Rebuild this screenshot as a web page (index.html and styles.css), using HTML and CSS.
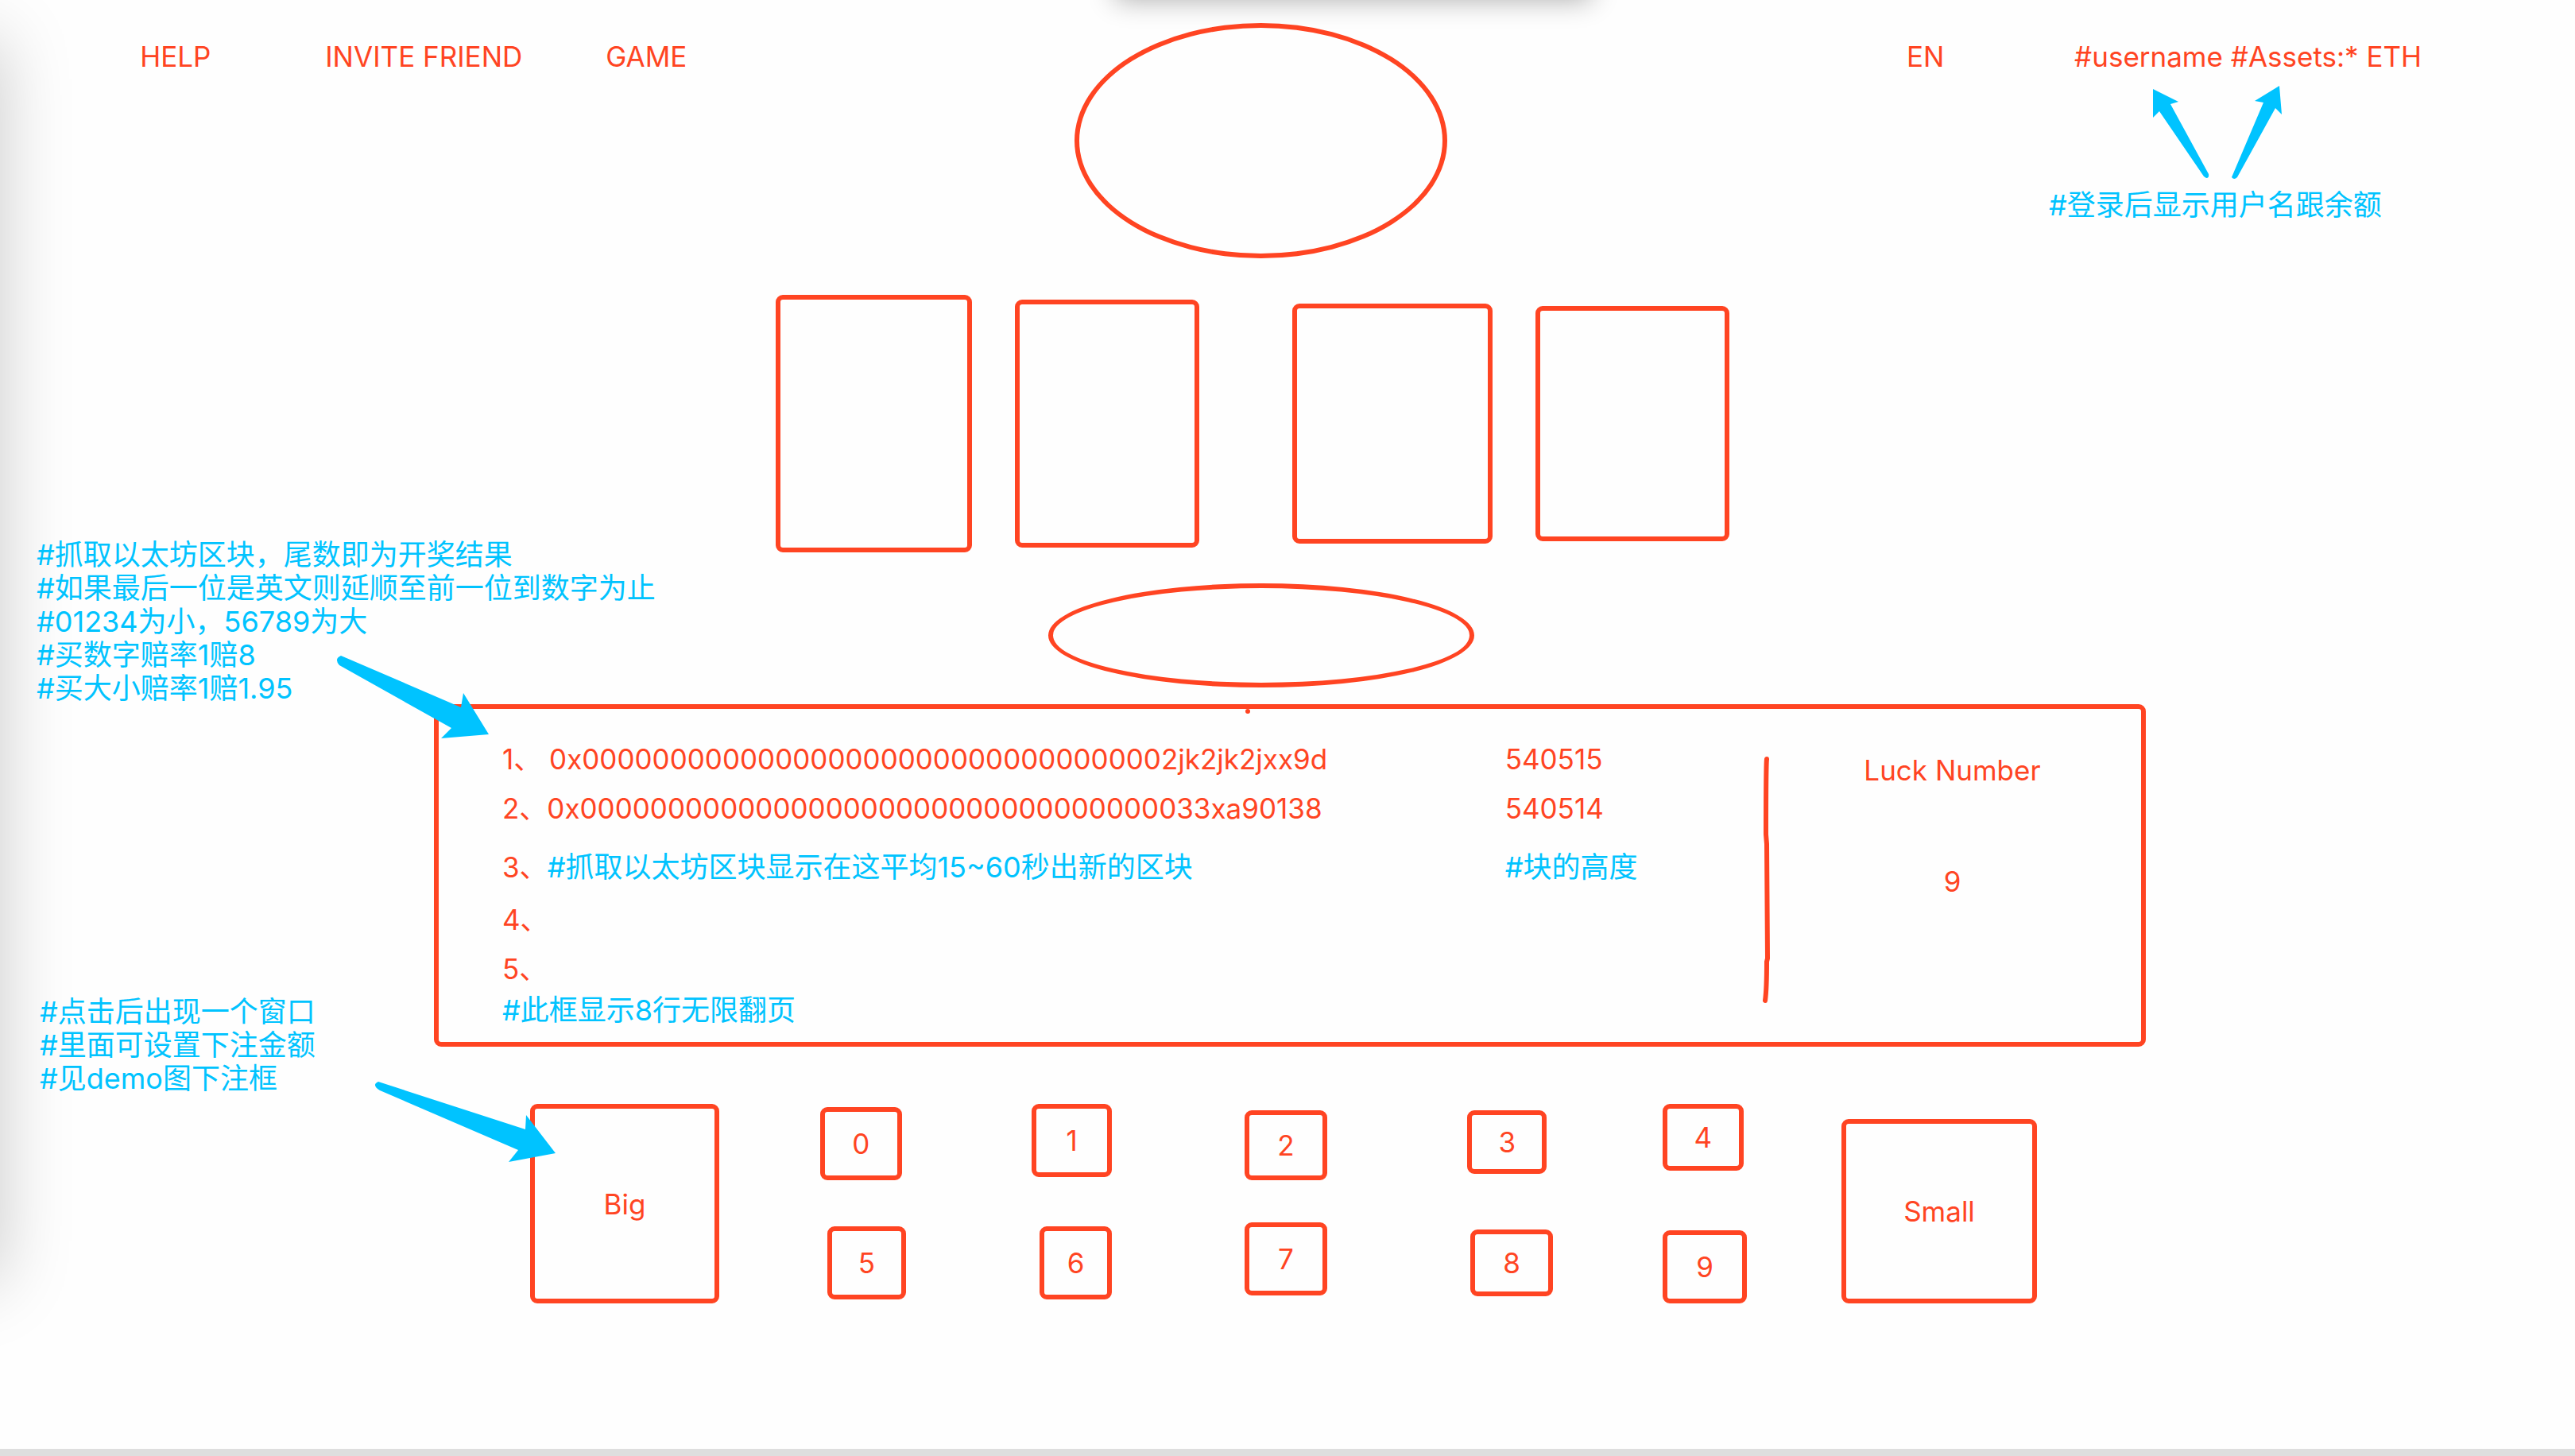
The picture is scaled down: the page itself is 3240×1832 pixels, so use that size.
FILE: index.html
```html
<!DOCTYPE html>
<html lang="zh-CN">
<head>
<meta charset="utf-8">
<meta name="viewport" content="width=device-width, initial-scale=1">
<title>Luck Number</title>
<link rel="stylesheet" href="styles.css">
</head>
<body>
<div class="page">
  <header class="header">
    <a class="link" href="#help">HELP</a>
    <a class="link" href="#invite">INVITE FRIEND</a>
    <a class="link" href="#game">GAME</a>
    <div class="logo"></div>
    <button class="link language" type="button">EN</button>
    <div class="link account">
      <span>#username #Assets:* ETH</span>
      <svg class="account-arrows" width="166" height="120" viewBox="0 0 166 120" aria-hidden="true">
        <path d="M2 6 34 22 24 25 72 113Q73 118 69 118L66 116 10 34 2 42Z"/>
        <path d="M161 2 164 38 156 30 108 117Q104 121 101 117L141 23 130 21Z"/>
      </svg>
      <p class="note account-note">#登录后显示用户名跟余额</p>
    </div>
  </header>

  <main>
    <div class="slots">
      <div class="slot slot-1"></div>
      <div class="slot slot-2"></div>
      <div class="slot slot-3"></div>
      <div class="slot slot-4"></div>
    </div>

    <div class="banner"></div>

    <section class="draws">
      <div class="note rules-note">
        <p>#抓取以太坊区块，尾数即为开奖结果</p>
        <p>#如果最后一位是英文则延顺至前一位到数字为止</p>
        <p>#01234为小，56789为大</p>
        <p>#买数字赔率1赔8</p>
        <p>#买大小赔率1赔1.95</p>
      </div>
      <div class="panel">
        <span class="dot"></span>
        <div class="blocks">
          <table>
            <tbody>
              <tr><td class="hash">1、 0x0000000000000000000000000000000002jk2jk2jxx9d</td><td>540515</td></tr>
              <tr><td class="hash">2、0x000000000000000000000000000000000033xa90138</td><td>540514</td></tr>
              <tr class="annotated"><td class="hash">3、<span class="note">#抓取以太坊区块显示在这平均15~60秒出新的区块</span></td><td class="note">#块的高度</td></tr>
              <tr><td class="hash">4、</td><td></td></tr>
              <tr><td class="hash">5、</td><td></td></tr>
            </tbody>
          </table>
          <p class="note">#此框显示8行无限翻页</p>
        </div>
        <svg class="divider" width="8" height="310" viewBox="0 0 8 310" aria-hidden="true">
          <path d="M4 3Q3 10 3 98L4 110 5 254 4 258Q4 292 2 307"/>
        </svg>
        <dl class="luck">
          <dt>Luck Number</dt>
          <dd>9</dd>
        </dl>
        <svg class="arrow panel-arrow" width="192" height="106" viewBox="0 0 192 106" aria-hidden="true">
          <path d="M6 1 157 66 160 48 192 100 132 105 145 92 4 13Q-3 5 6 1Z"/>
        </svg>
      </div>
    </section>

    <section class="bets">
      <div class="note bet-note">
        <p>#点击后出现一个窗口</p>
        <p>#里面可设置下注金额</p>
        <p>#见demo图下注框</p>
      </div>
      <div class="side side-big">
        <button class="bet" type="button">Big</button>
        <svg class="arrow bet-arrow" width="228" height="103" viewBox="0 0 228 103" aria-hidden="true">
          <path d="M5 1 190 61 191 43 228 91 169 102 181 87 7 12Q-4 5 5 1Z"/>
        </svg>
      </div>
      <button class="bet key key-0" type="button">0</button>
      <button class="bet key key-1" type="button">1</button>
      <button class="bet key key-2" type="button">2</button>
      <button class="bet key key-3" type="button">3</button>
      <button class="bet key key-4" type="button">4</button>
      <button class="bet key key-5" type="button">5</button>
      <button class="bet key key-6" type="button">6</button>
      <button class="bet key key-7" type="button">7</button>
      <button class="bet key key-8" type="button">8</button>
      <button class="bet key key-9" type="button">9</button>
      <button class="bet side-small" type="button">Small</button>
    </section>
  </main>

  <footer class="footer"></footer>
</div>
</body>
</html>
```
FILE: styles.css
```css
:root {
  --red: #ff4422;
  --blue: #00c3ff;
  --line: 6px;
  --radius: 9px;
}

* {
  box-sizing: border-box;
}

body {
  margin: 0;
  background: #fefefe;
  color: var(--red);
  font: 35px/42px Inter, "Noto Sans CJK SC", sans-serif;
}

p,
dl,
dd {
  margin: 0;
}

.page {
  position: relative;
  display: flex;
  flex-direction: column;
  min-height: 100vh;
  overflow: hidden;
}

/* Soft shadows that fall in from the left and top edges */
.page::before,
.page::after {
  content: "";
  position: absolute;
  pointer-events: none;
}

.page::before {
  left: -100px;
  top: 50px;
  bottom: 220px;
  width: 100px;
  box-shadow: 0 0 90px rgba(0, 0, 0, 0.21);
}

.page::after {
  left: 43.3%;
  right: 38.2%;
  top: -100px;
  height: 100px;
  box-shadow: 0 0 32px rgba(0, 0, 0, 0.32);
}

.note {
  color: var(--blue);
  font-size: 36px;
}

.note p,
p.note {
  white-space: nowrap;
}

.arrow {
  position: absolute;
  fill: var(--blue);
}

/* Header */
.header {
  display: grid;
  grid-template-columns: 233fr 353fr 590fr 469fr 578fr 211fr 630fr;
  align-items: start;
  padding: 29px 0 0 5.44%;
}

.link {
  margin: 21px 0 0;
  padding: 0;
  border: 0;
  background: none;
  color: inherit;
  font: inherit;
  text-align: left;
  text-decoration: none;
  white-space: nowrap;
}

.logo {
  height: 296px;
  border: var(--line) solid var(--red);
  border-radius: 50%;
}

.language {
  grid-column: 6;
}

.account {
  position: relative;
}

.account-arrows {
  position: absolute;
  top: 56px;
  left: 97px;
  fill: var(--blue);
}

.account-note {
  position: absolute;
  top: 187px;
  left: -32px;
}

/* Picture slots */
.slots {
  display: grid;
  grid-template-columns: 976fr 247fr 54fr 232fr 117fr 252fr 54fr 244fr 1064fr;
  align-items: center;
  margin-top: 46px;
}

.slot {
  border: var(--line) solid var(--red);
  border-radius: var(--radius);
}

.slot-1 {
  grid-column: 2;
  height: 324px;
}

.slot-2 {
  grid-column: 4;
  height: 312px;
}

.slot-3 {
  grid-column: 6;
  height: 302px;
}

.slot-4 {
  grid-column: 8;
  height: 296px;
}

.banner {
  width: 16.55%;
  height: 131px;
  margin: 39px 0 0 40.7%;
  border: var(--line) solid var(--red);
  border-radius: 50%;
}

/* Draw results */
.draws {
  position: relative;
  display: grid;
  grid-template-columns: 546fr 2154fr 540fr;
  margin-top: 21px;
}

.rules-note {
  position: absolute;
  left: 46px;
  top: -209px;
}

.panel {
  position: relative;
  grid-column: 2;
  display: grid;
  grid-template-columns: 1667fr 8px 467fr;
  align-items: start;
  border: var(--line) solid var(--red);
  border-radius: var(--radius);
}

.dot {
  position: absolute;
  left: 47.4%;
  top: 0;
  width: 6px;
  height: 6px;
  border-radius: 50%;
  background: var(--red);
}

.blocks {
  padding: 42px 0 19px 80px;
}

table {
  width: 100%;
  border-collapse: collapse;
}

td {
  padding: 0 0 20px;
  white-space: nowrap;
}

.hash {
  width: 79.5%;
}

.annotated td {
  padding: 12px 0 24px;
}

tr:last-child td {
  padding-bottom: 10px;
}

.divider {
  margin-top: 60px;
  fill: none;
  stroke: var(--red);
  stroke-width: 6px;
  stroke-linecap: round;
  overflow: visible;
}

.luck {
  display: grid;
  gap: 98px;
  padding: 56px 8px 0 0;
  text-align: center;
}

.panel-arrow {
  left: -129px;
  top: -68px;
}

/* Betting keys */
.bets {
  position: relative;
  display: grid;
  grid-template-columns: 667fr 238fr 127fr 108fr 158fr 101fr 167fr 104fr 176fr 108fr 138fr 106fr 119fr 246fr 677fr;
  grid-template-rows: 96px 102px;
  row-gap: 53px;
  align-items: center;
  margin-top: 72px;
}

.bet-note {
  position: absolute;
  left: 50px;
  top: -137px;
}

.bet {
  padding: 0;
  border: var(--line) solid var(--red);
  border-radius: var(--radius);
  background: none;
  color: inherit;
  font: inherit;
}

.side-big {
  position: relative;
  grid-area: 1 / 2 / 3 / 3;
  display: grid;
  height: 100%;
}

.side-small {
  grid-area: 1 / 14 / 3 / 15;
  align-self: end;
  height: 232px;
}

.bet-arrow {
  right: 206px;
  top: -29px;
}

.key {
  height: 92px;
  width: 100%;
}

.key-0 {
  grid-area: 1 / 4;
  align-self: end;
  width: 95%;
}

.key-1 {
  grid-area: 1 / 6;
  align-self: start;
}

.key-2 {
  grid-area: 1 / 8;
  align-self: end;
  height: 88px;
}

.key-3 {
  grid-area: 1 / 10;
  height: 80px;
  width: 93%;
}

.key-4 {
  grid-area: 1 / 12;
  align-self: start;
  height: 84px;
  width: 96%;
}

.key-5 {
  grid-area: 2 / 4;
  justify-self: end;
  width: 92%;
}

.key-6 {
  grid-area: 2 / 6;
  justify-self: end;
  width: 90%;
}

.key-7 {
  grid-area: 2 / 8;
  align-self: start;
}

.key-8 {
  grid-area: 2 / 10;
  justify-self: end;
  height: 84px;
  width: 96%;
}

.key-9 {
  grid-area: 2 / 12;
  align-self: end;
}

.footer {
  height: 9px;
  margin-top: auto;
  background: #dedede;
}
```
